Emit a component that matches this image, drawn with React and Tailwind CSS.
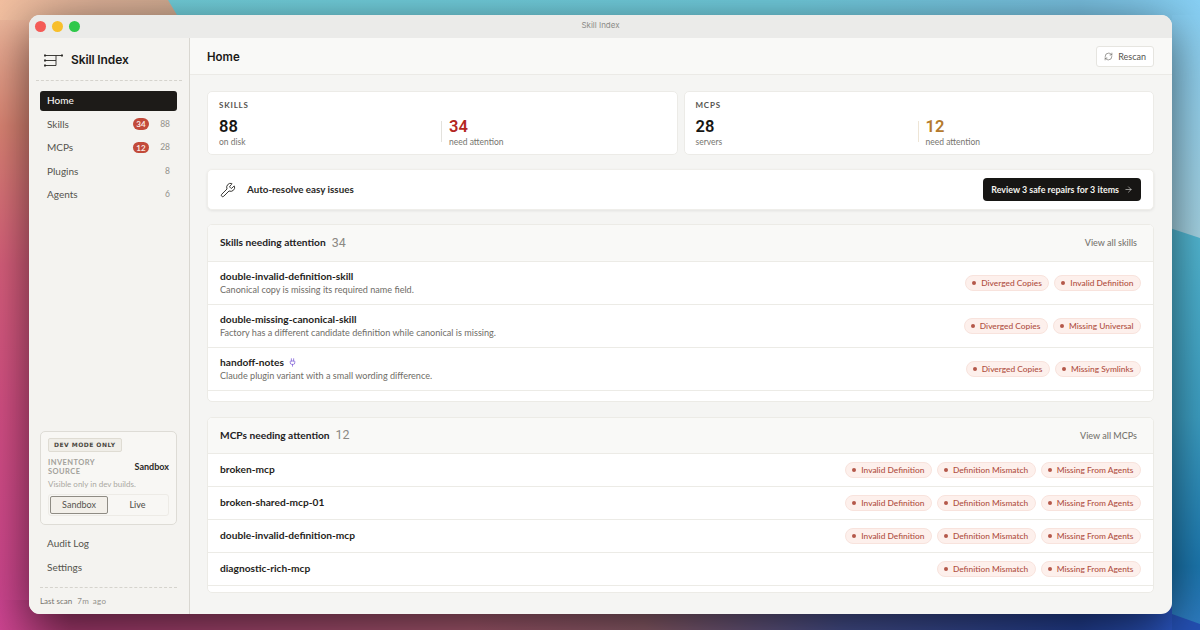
import { RefreshCw, Wrench, ArrowRight, Plug } from "lucide-react";

const skillRows = [
    {
        name: "double-invalid-definition-skill",
        desc: "Canonical copy is missing its required name field.",
        tags: ["Diverged Copies", "Invalid Definition"],
    },
    {
        name: "double-missing-canonical-skill",
        desc: "Factory has a different candidate definition while canonical is missing.",
        tags: ["Diverged Copies", "Missing Universal"],
    },
    {
        name: "handoff-notes",
        plugin: true,
        desc: "Claude plugin variant with a small wording difference.",
        tags: ["Diverged Copies", "Missing Symlinks"],
    },
];

const mcpRows = [
    { name: "broken-mcp", tags: ["Invalid Definition", "Definition Mismatch", "Missing From Agents"] },
    { name: "broken-shared-mcp-01", tags: ["Invalid Definition", "Definition Mismatch", "Missing From Agents"] },
    { name: "double-invalid-definition-mcp", tags: ["Invalid Definition", "Definition Mismatch", "Missing From Agents"] },
    { name: "diagnostic-rich-mcp", tags: ["Definition Mismatch", "Missing From Agents"] },
];

const navItems = [
    { label: "Skills", badge: "34", count: "88" },
    { label: "MCPs", badge: "12", count: "28" },
    { label: "Plugins", count: "8" },
    { label: "Agents", count: "6" },
];

const Tag = ({ label }) => (
    <span className="flex h-[16px] items-center gap-[5px] rounded-full border border-[#f8e3dd] bg-[#fdf0ec] pl-[6px] pr-[6.5px] text-[8.4px] font-medium text-[#b04f42]">
        <span className="h-[4px] w-[4px] rounded-full bg-[#b4584a]" />
        {label}
    </span>
);

const StatCard = ({ title, total, totalLabel, attention, attentionColor, lineColor }) => (
    <div className="flex h-[64px] flex-1 flex-col rounded-[5px] border border-[#ecebe7] bg-white px-[11px] pt-[8px]">
        <p className="text-[8px] font-bold leading-[10px] tracking-[0.1em] text-[#55534e]">{title}</p>
        <div className="mt-[6px] flex">
            <div className="w-[222px]">
                <p className="font-['Roboto',sans-serif] text-[16.5px] font-semibold leading-[21px] text-[#171614]">{total}</p>
                <p className="text-[8.5px] leading-[10px] text-[#77756f]">{totalLabel}</p>
            </div>
            <div className={`mt-[5px] h-[21px] w-px ${lineColor}`} />
            <div className="ml-[7px]">
                <p className={`font-['Roboto',sans-serif] text-[16.5px] font-semibold leading-[21px] ${attentionColor}`}>{attention}</p>
                <p className="text-[8.5px] leading-[10px] text-[#77756f]">need attention</p>
            </div>
        </div>
    </div>
);

const SectionHeader = ({ title, count, link, height }) => (
    <div className={`flex ${height} items-center justify-between border-b border-[#ecebe6] bg-[#f9f9f7] pl-[12px] pr-[16px]`}>
        <div className="flex items-center gap-[6px]">
            <span className="text-[10.2px] font-bold text-[#23221f]">{title}</span>
            <span className="font-['Roboto',sans-serif] text-[12.5px] text-[#8b8984]">{count}</span>
        </div>
        <span className="text-[9px] font-medium text-[#77756f]">{link}</span>
    </div>
);

export default function App() {
    return (
        <div className="relative h-[630px] w-[1200px] overflow-hidden pl-[29px] pt-[15px] font-['Lato',sans-serif]">
            {/* Wallpaper */}
            <svg className="absolute inset-0" width="1200" height="630" viewBox="0 0 1200 630">
                <defs>
                    <linearGradient id="left" x1="0" y1="0" x2="0" y2="1">
                        <stop offset="0" stopColor="#f0bfa2" />
                        <stop offset="0.2" stopColor="#dc8574" />
                        <stop offset="0.42" stopColor="#d85f7c" />
                        <stop offset="0.65" stopColor="#d44f84" />
                        <stop offset="1" stopColor="#cc4490" />
                    </linearGradient>
                    <linearGradient id="sky" x1="0" y1="0" x2="0" y2="1">
                        <stop offset="0" stopColor="#88d0f4" />
                        <stop offset="1" stopColor="#a6d4e4" />
                    </linearGradient>
                    <linearGradient id="sea" x1="0" y1="0" x2="0" y2="1">
                        <stop offset="0" stopColor="#56bcd6" />
                        <stop offset="0.5" stopColor="#3da0c4" />
                        <stop offset="0.85" stopColor="#1c78b0" />
                        <stop offset="1" stopColor="#2f7cc2" />
                    </linearGradient>
                    <linearGradient id="bottom" x1="0" y1="0" x2="1" y2="0">
                        <stop offset="0" stopColor="#cc4490" />
                        <stop offset="0.06" stopColor="#a83a70" />
                        <stop offset="0.4" stopColor="#a85a70" />
                        <stop offset="0.55" stopColor="#8f5f6c" />
                        <stop offset="0.72" stopColor="#46508f" />
                        <stop offset="0.92" stopColor="#234095" />
                        <stop offset="1" stopColor="#2a55c0" />
                    </linearGradient>
                    <linearGradient id="teal" x1="0" y1="0" x2="1" y2="0">
                        <stop offset="0" stopColor="#72d0da" />
                        <stop offset="0.65" stopColor="#70cbdc" />
                        <stop offset="0.9" stopColor="#78bfdf" />
                        <stop offset="1" stopColor="#88d0f4" />
                    </linearGradient>
                    <linearGradient id="peach" x1="0" y1="0" x2="1" y2="0">
                        <stop offset="0" stopColor="#f2bfa0" />
                        <stop offset="0.55" stopColor="#dcb097" />
                        <stop offset="1" stopColor="#d2ac92" />
                    </linearGradient>
                </defs>
                <rect x="1100" y="0" width="100" height="240" fill="url(#sky)" />
                <polygon points="1100,205 1200,238 1200,630 1100,630" fill="url(#sea)" />
                <rect x="0" y="0" width="1200" height="20" fill="url(#teal)" />
                <rect x="1172" y="15" width="28" height="5" fill="#88d0f4" />
                <rect x="0" y="0" width="60" height="630" fill="url(#left)" />
                <polygon points="0,0 168,0 180,20 0,20" fill="url(#peach)" />
                <polygon points="0,600 1172,600 1172,630 0,630" fill="url(#bottom)" />
                <polygon points="1172,614 1200,624 1200,630 1172,630" fill="#2450b4" />
            </svg>

            <div className="relative flex h-[599px] w-[1143px] flex-col overflow-hidden rounded-[11px] bg-[#f5f5f3] shadow-[0_12px_48px_rgba(0,0,0,0.6)]">
                {/* Title bar */}
                <div className="relative flex h-[23px] shrink-0 items-center justify-center bg-[#ebebe9] pb-[3px]">
                    <div className="absolute left-[6px] top-[6px] flex gap-[6.5px]">
                        <span className="h-[10.5px] w-[10.5px] rounded-full bg-[#f45b57]" />
                        <span className="h-[10.5px] w-[10.5px] rounded-full bg-[#f8bf2c]" />
                        <span className="h-[10.5px] w-[10.5px] rounded-full bg-[#2fc84a]" />
                    </div>
                    <span className="font-['Inter',sans-serif] text-[8px] text-[#8c8b88]">Skill Index</span>
                </div>

                <div className="flex min-h-0 flex-1">
                    {/* Sidebar */}
                    <aside className="flex w-[161px] shrink-0 flex-col border-r border-[#d9d7d1] bg-[#f4f3f0]">
                        <div className="mx-[7px] flex h-[43px] shrink-0 items-center gap-[8px] border-b border-dashed border-[#d5d3cd] pl-[8px] pt-[2px]">
                            <svg width="19" height="13" viewBox="0 0 19 13" fill="none" stroke="#2a2926" strokeWidth="0.9">
                                <path d="M1 1.5H18M1 6.5H12M1 11.5H12M12 1.5V11.5" />
                                <circle cx="1" cy="1.5" r="0.8" fill="#2a2926" />
                                <circle cx="1" cy="6.5" r="0.8" fill="#2a2926" />
                                <circle cx="1" cy="11.5" r="0.8" fill="#2a2926" />
                                <circle cx="18" cy="1.5" r="0.8" fill="#2a2926" />
                            </svg>
                            <span className="font-['Inter',sans-serif] text-[12px] font-semibold tracking-[-0.01em] text-[#1a1917]">Skill Index</span>
                        </div>

                        <nav className="ml-[11px] mr-[12px] mt-[9.5px] flex flex-col gap-[3.5px]">
                            <div className="flex h-[20px] items-center rounded-[3px] bg-[#1d1b18] px-[7px] text-[10px] font-medium text-[#f5f4f0]">
                                Home
                            </div>
                            {navItems.map((item) => (
                                <div key={item.label} className="flex h-[20px] items-center px-[7px] text-[10px] text-[#55534e]">
                                    <span className="flex-1">{item.label}</span>
                                    {item.badge && (
                                        <span className="mr-[11px] flex h-[11.5px] w-[16px] items-center justify-center rounded-full bg-[#c24a3a] text-[8px] font-bold text-[#fbe9e5]">
                                            {item.badge}
                                        </span>
                                    )}
                                    <span className="w-[10px] text-right text-[8.5px] text-[#93918b]">{item.count}</span>
                                </div>
                            ))}
                        </nav>

                        <div className="ml-[11px] mr-[12px] mt-auto flex h-[94px] shrink-0 flex-col rounded-[5px] border border-[#dedcd6] bg-[#f8f7f4] px-[7px] pt-[6px]">
                            <span className="w-fit rounded-[2px] border border-[#dfdcd3] bg-[#f0eee8] px-[5px] py-[1px] font-['DejaVu_Sans',sans-serif] text-[6px] font-bold leading-[10px] tracking-[0.08em] text-[#4a4740]">
                                DEV MODE ONLY
                            </span>
                            <div className="mt-[6px] flex items-center justify-between">
                                <span className="w-[60px] text-[7.5px] font-bold leading-[9px] tracking-[0.06em] text-[#a3a19b]">
                                    INVENTORY SOURCE
                                </span>
                                <span className="text-[9px] font-bold text-[#2a2926]">Sandbox</span>
                            </div>
                            <p className="mt-[3px] text-[8px] leading-[10px] text-[#aaa8a2]">Visible only in dev builds.</p>
                            <div className="mt-[5px] flex h-[22px] rounded-[3px] border border-[#edebe6] p-[1px] text-[9px]">
                                <span className="flex w-[58px] items-center justify-center rounded-[2px] border border-[#8f8c84] bg-[#f3f0ea] text-[#55534e]">
                                    Sandbox
                                </span>
                                <span className="flex flex-1 items-center justify-center font-medium text-[#55534e]">Live</span>
                            </div>
                        </div>

                        <div className="mx-[11px] mt-[9px] flex flex-col gap-[3.5px]">
                            <div className="flex h-[20px] items-center px-[7px] text-[10px] text-[#55534e]">Audit Log</div>
                            <div className="flex h-[20px] items-center px-[7px] text-[10px] text-[#55534e]">Settings</div>
                        </div>

                        <div className="ml-[11px] mr-[12px] mt-[10px] flex h-[27px] shrink-0 items-center gap-[5px] border-t border-dashed border-[#d5d3cd] text-[8px] text-[#77756f]">
                            <span>Last scan</span>
                            <span className="tracking-[0.05em] text-[#93918b] [word-spacing:1px]">7m ago</span>
                        </div>
                    </aside>

                    {/* Main */}
                    <main className="flex min-w-0 flex-1 flex-col">
                        <header className="flex h-[37px] shrink-0 items-center justify-between border-b border-[#ebeae6] bg-[#f9f9f7] pl-[17px] pr-[18px] pt-[1px]">
                            <h1 className="pt-[2px] font-['Inter',sans-serif] text-[11.5px] font-semibold text-[#1a1917]">Home</h1>
                            <button className="flex h-[21px] items-center gap-[5px] rounded-[3px] border border-[#e6e5e0] bg-white px-[7px] text-[9px] text-[#55534e]">
                                <RefreshCw size={9} strokeWidth={1.5} />
                                Rescan
                            </button>
                        </header>

                        <div className="flex flex-col pl-[17px] pr-[18px] pt-[16px]">
                            <div className="flex gap-[6px]">
                                <StatCard
                                    title="SKILLS"
                                    total="88"
                                    totalLabel="on disk"
                                    attention="34"
                                    attentionColor="text-[#b3261e]"
                                    lineColor="bg-[#e3e2dd]"
                                />
                                <StatCard
                                    title="MCPS"
                                    total="28"
                                    totalLabel="servers"
                                    attention="12"
                                    attentionColor="text-[#b57a2c]"
                                    lineColor="bg-[#eee5d6]"
                                />
                            </div>

                            <div className="mt-[14px] flex h-[41px] items-center justify-between rounded-[5px] border border-[#efeeea] bg-white px-[12px] shadow-[0_1px_3px_rgba(0,0,0,0.08)]">
                                <div className="flex items-center gap-[11px]">
                                    <Wrench size={16} strokeWidth={1.4} className="text-[#2a2926]" />
                                    <span className="text-[9.8px] font-bold text-[#2a2926]">Auto-resolve easy issues</span>
                                </div>
                                <button className="flex h-[23px] items-center gap-[5px] rounded-[4px] bg-[#171614] px-[8px] text-[8.9px] font-bold text-[#f5f4f0]">
                                    Review 3 safe repairs for 3 items
                                    <ArrowRight size={9} strokeWidth={1.5} />
                                </button>
                            </div>

                            <section className="mt-[14px] h-[178px] overflow-hidden rounded-[5px] border border-[#ecebe6] bg-white">
                                <SectionHeader title="Skills needing attention" count="34" link="View all skills" height="h-[37px]" />
                                {skillRows.map((row) => (
                                    <div key={row.name} className="flex h-[43px] items-center justify-between border-b border-[#ecebe6] px-[12px]">
                                        <div>
                                            <div className="flex items-center gap-[4px]">
                                                <span className="text-[10.2px] font-bold leading-[13px] text-[#1f1e1b]">{row.name}</span>
                                                {row.plugin && <Plug size={9} strokeWidth={2} className="text-[#7c5cd6]" />}
                                            </div>
                                            <p className="text-[9.1px] leading-[13px] text-[#6f6d67]">{row.desc}</p>
                                        </div>
                                        <div className="flex gap-[5px]">
                                            {row.tags.map((t) => <Tag key={t} label={t} />)}
                                        </div>
                                    </div>
                                ))}
                            </section>

                            <section className="mt-[15px] h-[176px] overflow-hidden rounded-[5px] border border-[#ecebe6] bg-white">
                                <SectionHeader title="MCPs needing attention" count="12" link="View all MCPs" height="h-[36px]" />
                                {mcpRows.map((row) => (
                                    <div key={row.name} className="flex h-[33px] items-center justify-between border-b border-[#ecebe6] px-[12px]">
                                        <span className="text-[10.2px] font-bold text-[#1f1e1b]">{row.name}</span>
                                        <div className="flex gap-[5px]">
                                            {row.tags.map((t) => <Tag key={t} label={t} />)}
                                        </div>
                                    </div>
                                ))}
                            </section>
                        </div>
                    </main>
                </div>
            </div>
        </div>
    );
}
